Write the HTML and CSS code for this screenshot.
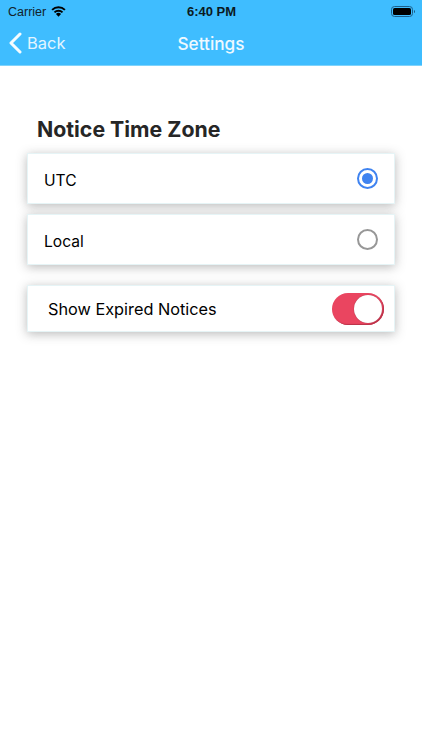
FILE: index.html
```html
<!DOCTYPE html>
<html lang="en">
<head>
<meta charset="utf-8">
<title>Settings</title>
<link rel="stylesheet" href="styles.css">
</head>
<body>
<header class="top">
  <div class="status">
    <div class="status-left">
      <span class="carrier">Carrier</span>
      <svg class="wifi" width="15" height="11" viewBox="0 0 16 12"><path d="M8 11.8 5.2 8.8a4 4 0 0 1 5.6 0Z" fill="#000"/><path d="M3.6 7a6.3 6.3 0 0 1 8.8 0" fill="none" stroke="#000" stroke-width="2.1"/><path d="M1 4.2a10 10 0 0 1 14 0" fill="none" stroke="#000" stroke-width="2.1"/></svg>
    </div>
    <span class="clock">6:40 PM</span>
    <svg class="battery" width="24" height="11" viewBox="0 0 24 11"><rect x=".5" y=".5" width="21" height="10" rx="3" fill="none" stroke="#1c5f8a"/><rect x="2" y="2" width="18" height="7" rx="1.6" fill="#000"/><path d="M23 4v3a1.6 1.6 0 0 0 0-3Z" fill="#1c5f8a"/></svg>
  </div>
  <nav class="nav">
    <a class="back">
      <svg width="14" height="22" viewBox="0 0 14 22"><path d="M12 2 3 11l9 9" fill="none" stroke="#fff" stroke-width="3" stroke-linecap="round" stroke-linejoin="round" opacity=".95"/></svg>
      <span>Back</span>
    </a>
    <h1 class="title">Settings</h1>
  </nav>
</header>
<main class="content">
  <h2 class="heading">Notice Time Zone</h2>
  <div class="card radio-card">
    <span class="label radio-label">UTC</span>
    <span class="radio radio-on"><span class="dot"></span></span>
  </div>
  <div class="card radio-card second">
    <span class="label radio-label">Local</span>
    <span class="radio"></span>
  </div>
  <div class="card toggle-card">
    <span class="label toggle-label">Show Expired Notices</span>
    <span class="switch"><span class="knob"></span></span>
  </div>
</main>
</body>
</html>
```
FILE: styles.css
```css
* { box-sizing: border-box; }
html, body { margin: 0; padding: 0; }
body {
  width: 422px;
  height: 750px;
  overflow: hidden;
  background: #fff;
  font-family: "Inter", "Liberation Sans", sans-serif;
  color: #000;
}
.top {
  height: 66px;
  background: #3fbdff;
  border-bottom: 1px solid #7fd3fb;
}
.status {
  height: 21px;
  padding: 2px 7px 0 8px;
  display: grid;
  grid-template-columns: 1fr auto 1fr;
  align-items: center;
}
.status-left { display: flex; align-items: center; gap: 5px; }
.carrier { font-family: "Liberation Sans", sans-serif; font-size: 12.5px; color: #12222c; }
.wifi { margin-top: -1px; }
.clock { font-family: "Liberation Sans", sans-serif; font-size: 13px; font-weight: 700; color: #0b1a22; }
.battery { justify-self: end; }
.nav {
  position: relative;
  height: 44px;
  display: flex;
  align-items: center;
  justify-content: center;
}
.back {
  position: absolute;
  left: 8px;
  top: 11px;
  display: flex;
  align-items: center;
  gap: 5px;
  color: #e3f5ff;
  font-size: 16.5px;
  line-height: 22px;
}
.title {
  margin: 0;
  font-size: 17.2px;
  font-weight: 500;
  color: #eef9ff;
}
.content { padding: 49px 27px 0; }
.heading {
  margin: 0 0 10px 10px;
  height: 28px;
  font-size: 21.3px;
  line-height: 28px;
  font-weight: 700;
  color: #262626;
}
.card {
  display: flex;
  align-items: center;
  justify-content: space-between;
  background: #fff;
  border: 1px solid #e6f4f6;
  box-shadow: 0 2px 10px rgba(60, 60, 60, .36);
}
.radio-card { height: 51px; padding: 0 16px; }
.second { margin-top: 10px; }
.toggle-card { height: 47px; margin-top: 20px; padding: 0 10px 0 20px; }
.label { font-size: 15.6px; color: #000; }
.radio-label { padding-top: 4px; }
.toggle-label { font-size: 16.3px; }
.radio {
  width: 21px;
  height: 21px;
  border: 2px solid #979797;
  border-radius: 50%;
  display: flex;
  align-items: center;
  justify-content: center;
}
.radio-on { border-color: #3f83f0; }
.dot { width: 11px; height: 11px; border-radius: 50%; background: #3f83f0; }
.switch {
  width: 52px;
  height: 32px;
  padding: 2px;
  border-radius: 16px;
  background: #ea4560;
  box-shadow: inset -1px -1px 1px #b83249;
  display: flex;
  justify-content: flex-end;
}
.knob {
  width: 28px;
  height: 28px;
  border-radius: 50%;
  background: #fff;
  box-shadow: 0 0 1px rgba(0, 0, 0, .4);
}
```
